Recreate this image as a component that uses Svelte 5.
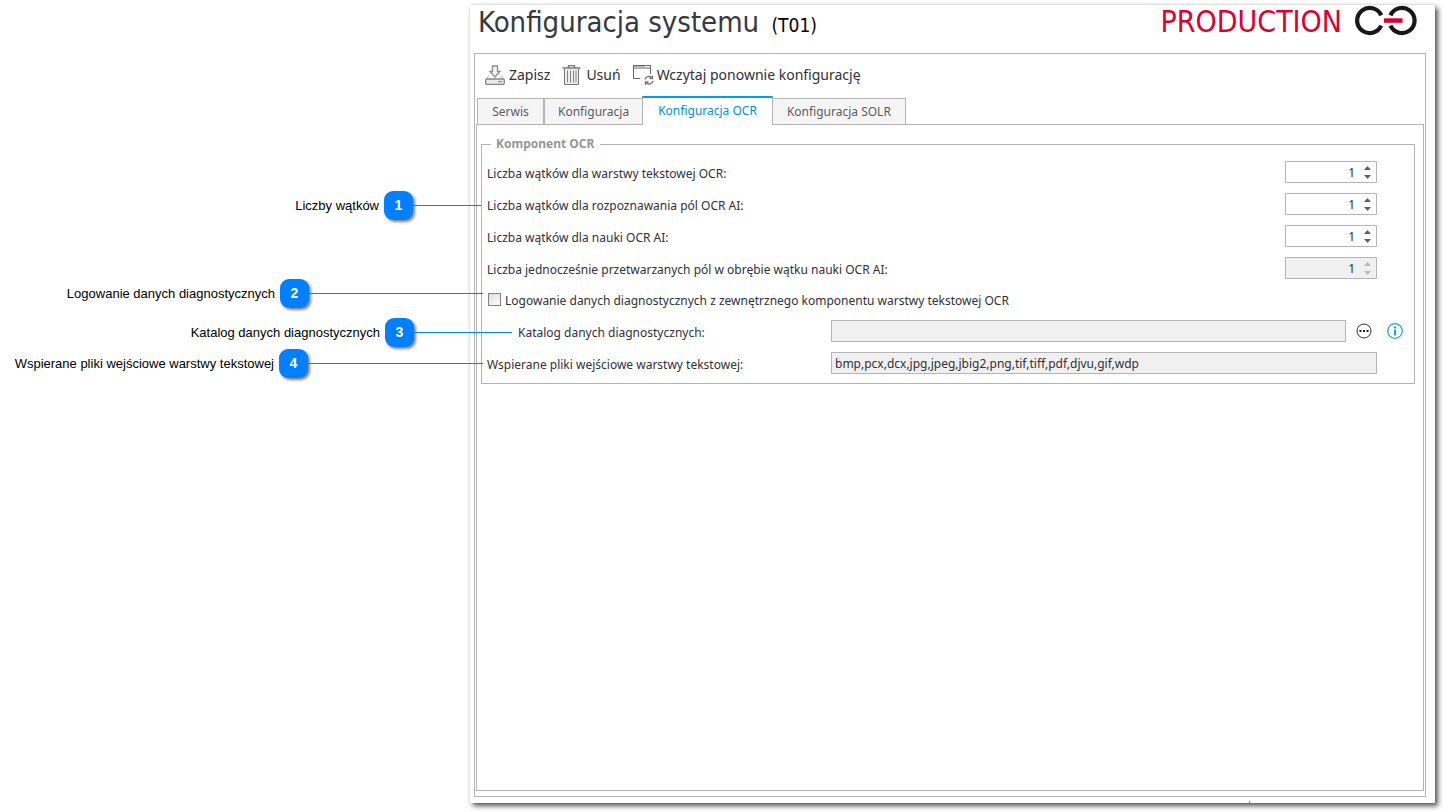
<script>
  let threads = $state([
    { id: 'text', label: 'Liczba wątków dla warstwy tekstowej OCR:', value: 1, disabled: false },
    { id: 'fields', label: 'Liczba wątków dla rozpoznawania pól OCR AI:', value: 1, disabled: false },
    { id: 'learn', label: 'Liczba wątków dla nauki OCR AI:', value: 1, disabled: false },
    { id: 'parallel', label: 'Liczba jednocześnie przetwarzanych pól w obrębie wątku nauki OCR AI:', value: 1, disabled: true }
  ]);
  const tabs = ['Serwis', 'Konfiguracja', 'Konfiguracja OCR', 'Konfiguracja SOLR'];
  let active = $state(2);
  let logging = $state(false);
  let directory = $state('');
  const formats = 'bmp,pcx,dcx,jpg,jpeg,jbig2,png,tif,tiff,pdf,djvu,gif,wdp';

  const notes = [
    { text: 'Liczby wątków', top: 190, end: 481, line: 68 },
    { text: 'Logowanie danych diagnostycznych', top: 278, end: 483, line: 174 },
    { text: 'Katalog danych diagnostycznych', top: 317, end: 512, line: 98 },
    { text: 'Wspierane pliki wejściowe warstwy tekstowej', top: 348, end: 483, line: 175 }
  ];
</script>

<div class="page">
  <main class="window">
    <header>
      <h1>Konfiguracja systemu <small>(T01)</small></h1>
      <div class="brand">
        <span>PRODUCTION</span>
        <svg width="64" height="31" viewBox="0 0 64 31" aria-hidden="true">
          <g fill="none" stroke="#18181b" stroke-width="4.200">
            <path d="M27.200 10.300A12.600 12.600 0 1 0 27.200 20.700" />
            <path d="M36.500 10.300A12.600 12.600 0 1 1 36.500 20.700" />
          </g>
          <path d="M30 13.300h18.500v4.500H30z" fill="#dc0032" />
        </svg>
      </div>
    </header>

    <section class="frame">
      <div class="toolbar">
        <button type="button">
          <svg width="21" height="21" viewBox="0 0 21 21" fill="#f4f4f4" stroke="#858585" aria-hidden="true">
            <path d="M4 10.500 1 14.500h18l-3-4" fill="none" stroke="#b8b8b8" />
            <path d="M7.500 1h5v5.500H15L10 12 5 6.500h2.500z" stroke="#8c8c8c" stroke-width="1.300" />
            <rect x=".7" y="14" width="18.600" height="5.300" rx="1.200" fill="#ececec" stroke-width="1.300" />
            <path d="M13 16.700h4" stroke="#777" />
          </svg>
          Zapisz
        </button>
        <button type="button" class="remove">
          <svg width="19" height="21" viewBox="0 0 19 21" fill="none" stroke="#777" aria-hidden="true">
            <path d="M6.500 2.500v-2h6v2M.5 3h18" stroke-width="1.500" />
            <path d="M2.500 4v15.500h14V4" fill="#ededed" />
            <path d="M5.500 5.500v12M8.500 5.500v12M11.500 5.500v12M14 5.500v12" stroke="#858585" />
          </svg>
          Usuń
        </button>
        <button type="button">
          <svg width="21" height="21" viewBox="0 0 21 21" fill="none" stroke="#666" aria-hidden="true">
            <path d="M7 13.500H.5V.5h17V9" />
            <path d="M0 3h18" />
            <path d="M1 1.500h11" stroke="#bbb" />
            <path d="M12 14.500a4 4 0 0 1 6.500-2M19.500 10.500v3h-3M20 16a4 4 0 0 1-6.500 2M12.500 20v-3h3" stroke="#777" stroke-width="1.400" />
          </svg>
          Wczytaj ponownie konfigurację
        </button>
      </div>

      <div class="tabs" role="tablist">
        {#each tabs as tab, i}
          <button type="button" role="tab" aria-selected={active === i} class:active={active === i} onclick={() => (active = i)}>{tab}</button>
        {/each}
      </div>

      <div class="panel" role="tabpanel">
        <fieldset>
          <legend>Komponent OCR</legend>
          {#each threads as t}
            <div class="row">
              <label for={t.id}>{t.label}</label>
              <div class="spin" class:disabled={t.disabled}>
                <input id={t.id} type="number" bind:value={t.value} disabled={t.disabled} />
                <div class="arrows">
                  <button type="button" aria-label="Zwiększ" disabled={t.disabled} onclick={() => t.value++}>
                    <svg width="7" height="4" viewBox="0 0 7 4" aria-hidden="true"><path d="M0 4 3.500 0 7 4z" fill="currentColor" /></svg>
                  </button>
                  <button type="button" aria-label="Zmniejsz" disabled={t.disabled} onclick={() => t.value--}>
                    <svg width="7" height="4" viewBox="0 0 7 4" aria-hidden="true"><path d="M0 0h7L3.500 4z" fill="currentColor" /></svg>
                  </button>
                </div>
              </div>
            </div>
          {/each}
          <div class="row check">
            <input id="logging" type="checkbox" bind:checked={logging} />
            <label for="logging">Logowanie danych diagnostycznych z zewnętrznego komponentu warstwy tekstowej OCR</label>
          </div>
          <div class="row wide">
            <label class="nested" for="directory">Katalog danych diagnostycznych:</label>
            <input id="directory" class="field" type="text" bind:value={directory} disabled />
            <div class="actions">
              <button type="button" aria-label="Wybierz katalog">
                <svg width="16" height="16" viewBox="0 0 16 16" aria-hidden="true">
                  <circle cx="8" cy="8" r="7" fill="none" stroke="#333" />
                  <path d="M3.500 7h2v2h-2zM7 7h2v2H7zM10.500 7h2v2h-2z" fill="#222" />
                </svg>
              </button>
              <button type="button" aria-label="Informacja">
                <svg width="16" height="16" viewBox="0 0 16 16" aria-hidden="true">
                  <circle cx="8" cy="8" r="7.300" fill="none" stroke="#18a4e8" stroke-width="1.300" />
                  <path d="M7 3.500h2v2H7zM7 6.500h2v6H7z" fill="#18a4e8" />
                </svg>
              </button>
            </div>
          </div>
          <div class="row wide">
            <label for="formats">Wspierane pliki wejściowe warstwy tekstowej:</label>
            <input id="formats" class="field" type="text" value={formats} readonly />
          </div>
        </fieldset>
      </div>
    </section>
  </main>

  {#each notes as note, i}
    <div class="note" style="top: {note.top}px; width: {note.end}px">
      <span>{note.text}</span>
      <b>{i + 1}</b>
      <i style="width: {note.line}px"></i>
    </div>
  {/each}
</div>

<style>
  :global(body) { background: #fff; }
  .page {
    position: relative;
    box-sizing: border-box;
    min-height: 100vh;
    display: flex;
    padding: 5px 9px 9px 470px;
    font: 12px/16px "Noto Sans", sans-serif;
    color: #303038;
  }
  .window {
    position: relative;
    flex: 1;
    min-width: 0;
    display: flex;
    flex-direction: column;
    box-sizing: border-box;
    padding: 0 9px 6px 4px;
    background: #fff;
    box-shadow: 3px 3px 5px rgba(0, 0, 0, .65), 0 0 3px rgba(0, 0, 0, .15);
  }
  .window::after {
    content: "";
    position: absolute;
    right: 185px;
    bottom: 0;
    width: 1px;
    height: 2px;
    background: #888;
  }
  header {
    display: flex;
    justify-content: space-between;
    height: 48px;
    padding: 0 8px 0 4px;
    font-family: "DejaVu Sans Condensed", "Noto Sans", sans-serif;
  }
  h1 {
    margin: 0;
    font-size: 29px;
    line-height: 34px;
    font-weight: 400;
    color: #363a40;
  }
  small { margin-left: 4px; font-size: 19px; color: #000; }
  .brand {
    display: flex;
    align-items: flex-start;
    gap: 12px;
    font-size: 30px;
    line-height: 34px;
    color: #dc0032;
  }
  .frame {
    flex: 1;
    display: flex;
    flex-direction: column;
    border: 1px solid #b4b4b4;
    padding: 0 1px 5px;
  }
  button {
    margin: 0;
    padding: 0;
    border: 0;
    background: none;
    font: inherit;
    color: inherit;
  }
  .toolbar {
    display: flex;
    gap: 12px;
    height: 42px;
    padding-left: 9px;
  }
  .toolbar button {
    display: flex;
    align-items: center;
    gap: 3px;
    font: 14px/20px "Noto Sans", sans-serif;
    color: #303038;
  }
  .toolbar .remove { gap: 5px; }
  .tabs {
    display: flex;
    align-items: flex-end;
    height: 28px;
    padding-left: 1px;
  }
  .tabs button {
    box-sizing: border-box;
    min-width: 67px;
    height: 27px;
    margin-bottom: -1px;
    padding: 0 13px;
    border: 1px solid #b4b4b4;
    background: #f5f5f5;
    color: #5c5c5c;
  }
  .tabs .active {
    position: relative;
    z-index: 1;
    height: 29px;
    margin-left: -1px;
    padding: 0 15px 2px;
    border: solid #b4b4b4;
    border-width: 2px 1px 0;
    border-top-color: #009fee;
    background: #fff;
    color: #008ee0;
  }
  .tabs .active + button {
    margin-left: -1px;
    padding: 0 14px;
  }
  .panel {
    flex: 1;
    border: 1px solid #b4b4b4;
    padding: 11px 8px 8px 4px;
  }
  fieldset {
    margin: 0;
    min-width: 0;
    border: 1px solid #b4b4b4;
    padding: 4px 37px 4px 5px;
  }
  legend {
    margin-left: 4px;
    padding: 0 6px 0 5px;
    font-weight: 700;
    color: #969696;
  }
  .row {
    display: flex;
    align-items: center;
    justify-content: space-between;
    height: 32px;
  }
  .row label { padding-top: 3px; }
  .row.check {
    justify-content: flex-start;
    gap: 4px;
    height: 30px;
    padding-bottom: 1px;
  }
  .check input {
    appearance: none;
    box-sizing: border-box;
    width: 13px;
    height: 13px;
    margin: 0 0 0 1px;
    border: 1px solid #808080;
    background: linear-gradient(135deg, #ddd, #fff);
  }
  .check input:checked { background: #008ee0; }
  .spin {
    display: flex;
    box-sizing: border-box;
    width: 92px;
    height: 22px;
    border: 1px solid #b4b4b4;
  }
  .spin.disabled { background: #f0f0f0; }
  .spin input {
    flex: 1;
    min-width: 0;
    border: 0;
    padding: 2px 0 0;
    background: none;
    text-align: right;
    font: inherit;
    color: #303038;
    appearance: textfield;
  }
  .spin input::-webkit-inner-spin-button { appearance: none; }
  .arrows {
    display: flex;
    flex-direction: column;
    justify-content: space-between;
    width: 21px;
    padding: 4px 0 3px;
    box-sizing: border-box;
  }
  .arrows button {
    display: flex;
    justify-content: center;
    padding-left: 3px;
    color: #606060;
  }
  .arrows button:disabled { color: #b8b8b8; }
  .wide { justify-content: flex-start; }
  .wide label { width: 344px; flex: none; }
  .wide .nested { box-sizing: border-box; padding-left: 31px; }
  .field {
    flex: 1;
    min-width: 0;
    box-sizing: border-box;
    height: 22px;
    border: 1px solid #b4b4b4;
    border-radius: 0;
    padding: 1px 3px 0;
    background: #f0f0f0;
    font: inherit;
    color: #303038;
  }
  .actions {
    display: flex;
    gap: 15px;
    margin-left: 10px;
    margin-right: -26px;
  }
  .actions button { display: flex; }
  .note {
    position: absolute;
    left: 0;
    display: flex;
    align-items: center;
    justify-content: flex-end;
    height: 30px;
    font: 13px/16px "Liberation Sans", sans-serif;
    color: #000;
  }
  .note span { padding-top: 1px; }
  .note b {
    width: 29px;
    height: 29px;
    margin-left: 5px;
    border-radius: 9px;
    background: #0080ff;
    box-shadow: 2px 2px 3px rgba(0, 0, 0, .5);
    color: #fff;
    font-size: 14px;
    line-height: 29px;
    text-align: center;
  }
  .note i { height: 1px; background: #0080ff; }
</style>
